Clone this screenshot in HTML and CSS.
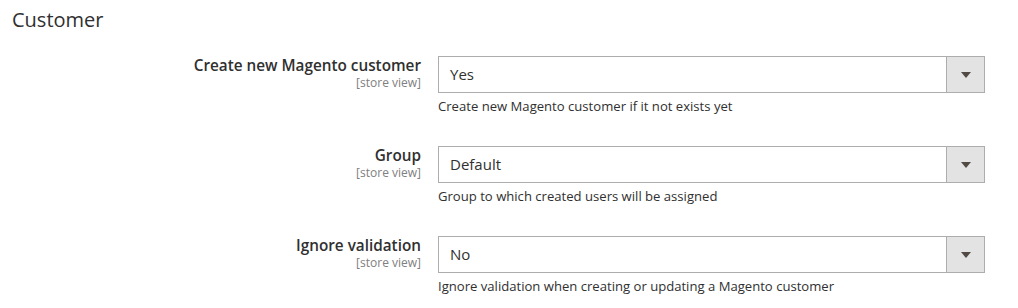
FILE: index.html
```html
<!DOCTYPE html>
<html>
<head>
<meta charset="utf-8">
<link rel="stylesheet" href="styles.css">
</head>
<body>
<div class="section">
  <h2 class="section-title">Customer</h2>
  <div class="fields">
    <div class="field">
      <div class="label">
        <span class="label-text">Create new Magento customer</span>
        <span class="scope">[store view]</span>
      </div>
      <div class="control">
        <div class="select">
          <span class="select-value">Yes</span>
          <span class="select-btn"><span class="arrow"></span></span>
        </div>
        <div class="note">Create new Magento customer if it not exists yet</div>
      </div>
    </div>
    <div class="field">
      <div class="label">
        <span class="label-text">Group</span>
        <span class="scope">[store view]</span>
      </div>
      <div class="control">
        <div class="select">
          <span class="select-value">Default</span>
          <span class="select-btn"><span class="arrow"></span></span>
        </div>
        <div class="note">Group to which created users will be assigned</div>
      </div>
    </div>
    <div class="field">
      <div class="label">
        <span class="label-text">Ignore validation</span>
        <span class="scope">[store view]</span>
      </div>
      <div class="control">
        <div class="select">
          <span class="select-value">No</span>
          <span class="select-btn"><span class="arrow"></span></span>
        </div>
        <div class="note">Ignore validation when creating or updating a Magento customer</div>
      </div>
    </div>
  </div>
</div>
</body>
</html>
```

FILE: styles.css
```css
html, body {
  margin: 0;
  padding: 0;
  background: #ffffff;
}
body {
  font-family: "Open Sans", "Liberation Sans", sans-serif;
  color: #303030;
}
.section {
  padding: 0 12px;
}
.section-title {
  margin: 0;
  padding-top: 6px;
  font-size: 20px;
  font-weight: 400;
  line-height: 28px;
  color: #303030;
}
.fields {
  padding-top: 22px;
  display: flex;
  flex-direction: column;
  gap: 31px;
}
.field {
  display: grid;
  grid-template-columns: 409px 547px;
  column-gap: 17px;
}
.label {
  display: flex;
  flex-direction: column;
  align-items: flex-end;
}
.label-text {
  font-size: 15.3px;
  font-weight: 600;
  line-height: 19px;
  color: #303030;
}
.scope {
  font-size: 12px;
  line-height: 16px;
  color: #808080;
}
.select {
  display: flex;
  height: 37px;
  box-sizing: border-box;
  border: 1px solid #adadad;
  background: #ffffff;
}
.select-value {
  flex: 1;
  padding-left: 11px;
  font-size: 15px;
  line-height: 35px;
  color: #303030;
}
.select-btn {
  width: 37px;
  border-left: 1px solid #adadad;
  background: #e3e3e3;
  display: flex;
  align-items: center;
  justify-content: center;
}
.arrow {
  width: 0;
  height: 0;
  border-left: 5px solid transparent;
  border-right: 5px solid transparent;
  border-top: 6px solid #514943;
}
.note {
  padding-top: 4px;
  font-size: 13.1px;
  line-height: 18px;
  color: #303030;
}
```
